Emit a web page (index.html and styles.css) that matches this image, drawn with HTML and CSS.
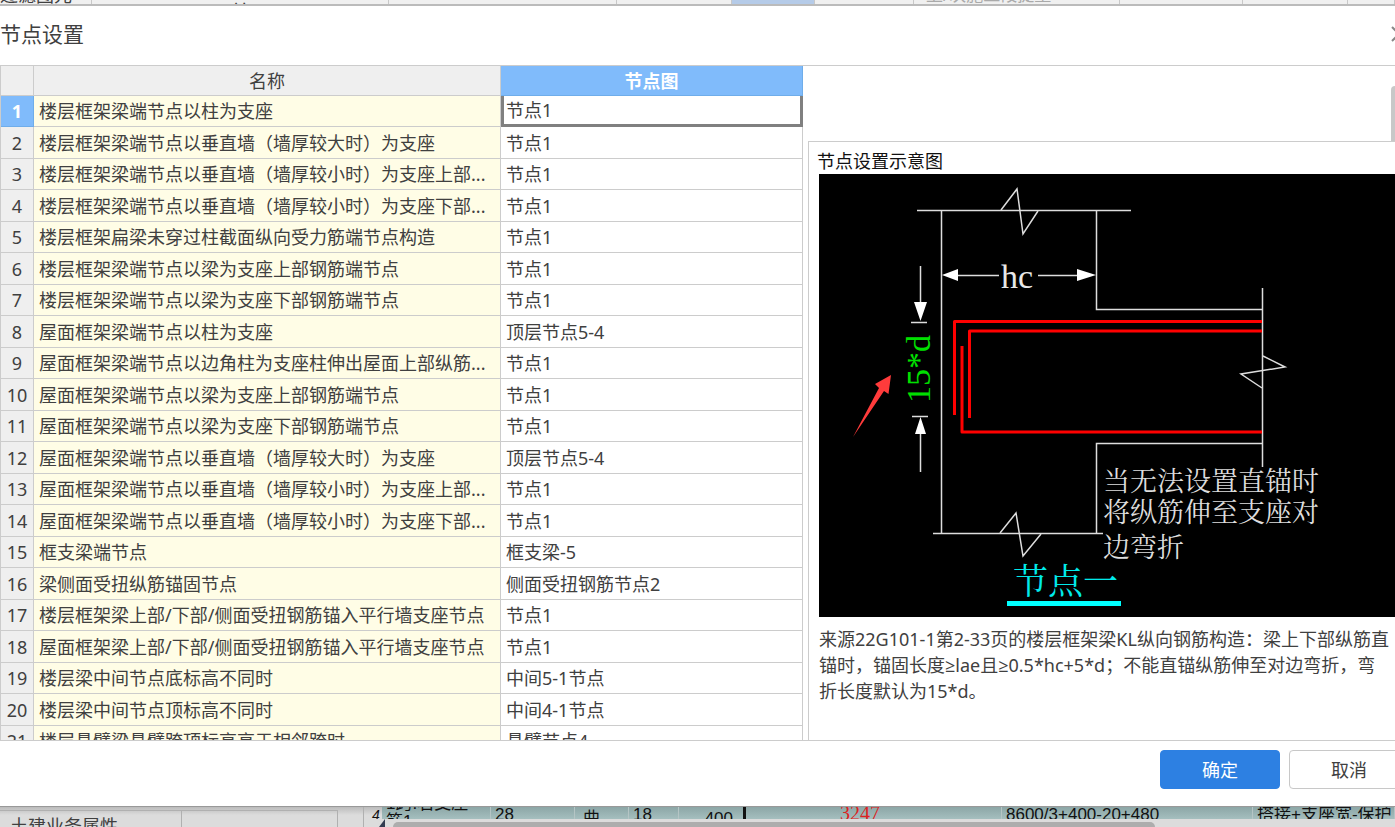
FILE: index.html
```html
<!DOCTYPE html>
<html lang="zh-CN">
<head>
<meta charset="utf-8">
<title>节点设置</title>
<link rel="stylesheet" href="styles.css">
</head>
<body>
<div class="ribbon">
  <span class="ribbon-label">过滤图元</span><span class="ribbon-below">关</span><span class="ribbon-empty"></span><span></span><span class="ribbon-active"></span><span></span><span class="ribbon-label ribbon-muted">上/次施工段提量</span><span></span><span></span><span></span>
</div>
<main class="dialog">
  <header class="dialog-header">
    <h1>节点设置</h1>
    <button class="close" type="button" aria-label="关闭"><svg width="16" height="16" viewBox="0 0 16 16"><path d="M1 1L15 15M15 1L1 15"/></svg></button>
  </header>
  <div class="dialog-content">
    <div class="table-pane">
      <table class="nodes">
        <colgroup><col class="col-index"><col class="col-name"><col class="col-node"></colgroup>
        <thead><tr><th></th><th scope="col">名称</th><th scope="col" class="active">节点图</th></tr></thead>
        <tbody>
          <tr class="current"><th scope="row">1</th><td>楼层框架梁端节点以柱为支座</td><td>节点1</td></tr>
          <tr><th scope="row">2</th><td>楼层框架梁端节点以垂直墙（墙厚较大时）为支座</td><td>节点1</td></tr>
          <tr><th scope="row">3</th><td>楼层框架梁端节点以垂直墙（墙厚较小时）为支座上部...</td><td>节点1</td></tr>
          <tr><th scope="row">4</th><td>楼层框架梁端节点以垂直墙（墙厚较小时）为支座下部...</td><td>节点1</td></tr>
          <tr><th scope="row">5</th><td>楼层框架扁梁未穿过柱截面纵向受力筋端节点构造</td><td>节点1</td></tr>
          <tr><th scope="row">6</th><td>楼层框架梁端节点以梁为支座上部钢筋端节点</td><td>节点1</td></tr>
          <tr><th scope="row">7</th><td>楼层框架梁端节点以梁为支座下部钢筋端节点</td><td>节点1</td></tr>
          <tr><th scope="row">8</th><td>屋面框架梁端节点以柱为支座</td><td>顶层节点5-4</td></tr>
          <tr><th scope="row">9</th><td>屋面框架梁端节点以边角柱为支座柱伸出屋面上部纵筋...</td><td>节点1</td></tr>
          <tr><th scope="row">10</th><td>屋面框架梁端节点以梁为支座上部钢筋端节点</td><td>节点1</td></tr>
          <tr><th scope="row">11</th><td>屋面框架梁端节点以梁为支座下部钢筋端节点</td><td>节点1</td></tr>
          <tr><th scope="row">12</th><td>屋面框架梁端节点以垂直墙（墙厚较大时）为支座</td><td>顶层节点5-4</td></tr>
          <tr><th scope="row">13</th><td>屋面框架梁端节点以垂直墙（墙厚较小时）为支座上部...</td><td>节点1</td></tr>
          <tr><th scope="row">14</th><td>屋面框架梁端节点以垂直墙（墙厚较小时）为支座下部...</td><td>节点1</td></tr>
          <tr><th scope="row">15</th><td>框支梁端节点</td><td>框支梁-5</td></tr>
          <tr><th scope="row">16</th><td>梁侧面受扭纵筋锚固节点</td><td>侧面受扭钢筋节点2</td></tr>
          <tr><th scope="row">17</th><td>楼层框架梁上部/下部/侧面受扭钢筋锚入平行墙支座节点</td><td>节点1</td></tr>
          <tr><th scope="row">18</th><td>屋面框架梁上部/下部/侧面受扭钢筋锚入平行墙支座节点</td><td>节点1</td></tr>
          <tr><th scope="row">19</th><td>楼层梁中间节点底标高不同时</td><td>中间5-1节点</td></tr>
          <tr><th scope="row">20</th><td>楼层梁中间节点顶标高不同时</td><td>中间4-1节点</td></tr>
          <tr><th scope="row">21</th><td>楼层悬臂梁悬臂跨顶标高高于相邻跨时</td><td>悬臂节点4</td></tr>
        </tbody>
      </table>
    </div>
    <div class="side">
      <div class="side-top"><div class="side-thumb"></div></div>
      <section class="preview">
        <h2>节点设置示意图</h2>
        <svg class="diagram" viewBox="0 0 576 443" role="img" aria-label="节点一">
          <rect class="canvas" width="576" height="443"/>
          <g class="outline">
            <path d="M98 36.5H312M122.5 36.5V359M277.500 36.5V135.500H443.500M443.500 114V293M114 359.500H284M277.500 359V269.500H443.500"/>
            <path d="M182 36L198 15L204 60L219 37M181 359L197 339L204 382L222 360M444 182L466 193L422 200L443 214"/>
            <path d="M139 101.500H180M219 101.500H259M101.500 92V130M101.500 258V298M92 148.500H108M93 242.500H109"/>
          </g>
          <path class="arrowhead" d="M123 101L139 95V107ZM277 101L258 95V107ZM101.500 147L95 128H108ZM101.500 243L96 260H107Z"/>
          <path class="rebar" d="M443 147.500H135.500V241M443 157H150.500V244M143 172V258H443"/>
          <text class="dim" x="182" y="114">hc</text>
          <text class="dim green" transform="translate(111 229) rotate(-90)">15*d</text>
          <text class="note" x="284" y="317">当无法设置直锚时</text>
          <text class="note" x="284" y="348">将纵筋伸至支座对</text>
          <text class="note" x="284" y="383">边弯折</text>
          <text class="caption" x="194" y="420">节点一</text>
          <rect class="cyan" x="188" y="427" width="114" height="5"/>
          <path class="pointer" d="M72 201L69.500 220L65 217L34 263L60 214L56 210Z"/>
        </svg>
        <p>来源22G101-1第2-33页的楼层框架梁KL纵向钢筋构造：梁上下部纵筋直<br>锚时，锚固长度≥lae且≥0.5*hc+5*d；不能直锚纵筋伸至对边弯折，弯<br>折长度默认为15*d。</p>
      </section>
    </div>
  </div>
  <footer class="dialog-footer">
    <button type="button" class="btn primary">确定</button>
    <button type="button" class="btn">取消</button>
  </footer>
</main>
<div class="workspace">
  <div class="props"><span>土建业务属性</span><span></span></div>
  <div class="gutter"></div>
  <div class="sheet">
    <div class="sheet-row">
      <span class="mark">4</span><span class="cell span-name">1跨.右支座<br>筋1</span><span class="cell">28</span><span class="cell lower">曲</span><span class="cell">18</span><span class="cell lower right caret">400</span><span class="cell red">3247</span><span class="cell">8600/3+400-20+480</span><span class="cell">搭接+支座宽-保护</span>
    </div>
    <div class="sheet-scroll"><svg width="6" height="8" viewBox="0 0 6 8"><path d="M6 0V8H0Z"/></svg><div class="sheet-thumb"></div></div>
  </div>
</div>
</body>
</html>
```
FILE: styles.css
```css
* { box-sizing: border-box; }

body {
  margin: 0;
  height: 100vh;
  display: flex;
  flex-direction: column;
  overflow: hidden;
  color: #404040;
  background: #fff;
  font: 18px/26px "Noto Sans", "Open Sans", "Noto Sans CJK SC", sans-serif;
}

button { font: inherit; color: inherit; }

/* Strip of the main window above the dialog */
.ribbon {
  flex: none;
  height: 6px;
  display: grid;
  grid-template-columns: 92fr 297fr 228fr 115fr 83fr 99fr 206fr 123fr 105fr 47fr;
  overflow: hidden;
  background: #f0f0f0;
  border-bottom: 2px solid #bbb;
}
.ribbon span {
  display: flex;
  height: 4px;
  overflow: hidden;
  white-space: nowrap;
  border-right: 1px solid #c8c8c8;
}
.ribbon .ribbon-label { align-items: flex-end; line-height: 18px; }
.ribbon .ribbon-muted { color: #aaa; padding-left: 12px; font-size: 17px; }
.ribbon .ribbon-below { justify-content: center; line-height: 22px; }
.ribbon .ribbon-active { background: #b5cbe8; }

/* Dialog */
.dialog {
  flex: 1;
  min-height: 0;
  display: flex;
  flex-direction: column;
  overflow: hidden;
}
.dialog-header {
  flex: none;
  height: 59px;
  display: flex;
  align-items: center;
  justify-content: space-between;
  padding-bottom: 4px;
}
.dialog-header h1 { margin: 0; font-size: 21px; font-weight: 400; }
.close {
  display: flex;
  margin: 0 -12px 0 0;
  padding: 0;
  border: 0;
  background: none;
}
.close path { stroke: #888; stroke-width: 2; fill: none; }
.dialog-content {
  flex: 1;
  min-height: 0;
  display: grid;
  grid-template-columns: minmax(0, 803fr) minmax(0, 592fr);
  border-top: 1px solid #ccc;
  border-bottom: 1px solid #ccc;
}
.table-pane { overflow: hidden; }

.nodes {
  width: 100%;
  table-layout: fixed;
  border-collapse: separate;
  border-spacing: 0;
  border-left: 1px solid #ccc;
  white-space: nowrap;
}
.col-index { width: 33px; }
.col-node { width: 302px; }
.nodes th,
.nodes td {
  padding: 0;
  overflow: hidden;
  border-right: 1px solid #ccc;
  border-bottom: 1px solid #ccc;
  font-weight: 400;
}
.nodes th { background: #efefef; text-align: center; }
.nodes thead tr { height: 30px; }
.nodes tbody tr { height: 31px; }
.nodes tbody tr:nth-child(even) { height: 32px; }
.nodes td { padding-left: 5px; }
.nodes td:nth-child(2) { background: #fffde6; }
.nodes .active,
.nodes .current th {
  color: #fff;
  background: #80bbfb;
  border-color: #6fadea;
  font-weight: 700;
}
.nodes .current td:last-child {
  padding-left: 2px;
  border: solid #808080;
  border-width: 0 3px 3px;
}

/* Preview */
.side {
  display: flex;
  flex-direction: column;
  min-height: 0;
  padding-left: 5px;
  overflow: hidden;
}
.side-top {
  flex: none;
  height: 75px;
  display: flex;
  justify-content: flex-end;
  padding-top: 20px;
}
.side-thumb { width: 4px; background: #c8c8c8; border-radius: 4px 0 0; }
.preview {
  flex: 1;
  border-top: 1px solid #ccc;
  border-left: 1px solid #ccc;
}
.preview h2 {
  margin: 0;
  padding: 6px 8px 0;
  color: #111;
  font-size: 18px;
  font-weight: 400;
}
.diagram { display: block; margin-left: 10px; width: calc(100% - 10px); }
.preview p { margin: 9px 0 0 10px; white-space: nowrap; }

.canvas { fill: #000; }
.outline { fill: none; stroke: #ddd; stroke-width: 1.5; }
.arrowhead { fill: #fff; }
.rebar { fill: none; stroke: #f00; stroke-width: 3; stroke-linejoin: round; }
.dim { fill: #e8e8e8; font: 34px "Liberation Serif", serif; }
.dim.green { fill: #00e000; }
.note { fill: #ddd; font: 400 27px "Noto Serif CJK SC", "Noto Sans CJK SC", serif; }
.caption { fill: #00eaea; font: 400 35px "Noto Serif CJK SC", "Noto Sans CJK SC", serif; }
.cyan { fill: #0ff; }
.pointer { fill: #ff3b3b; }

.dialog-footer {
  flex: none;
  height: 65px;
  display: flex;
  justify-content: flex-end;
  align-items: flex-start;
  gap: 9px;
  padding-top: 9px;
}
.btn {
  flex: none;
  width: 120px;
  height: 39px;
  padding: 0;
  border: 1px solid #c8c8c8;
  border-radius: 4px;
  background: #fff;
}
.btn.primary { color: #fff; background: #2d80e2; border-color: #2d80e2; }
.btn:last-child { margin-right: -14px; }

/* Strip of the main window below the dialog */
.workspace {
  flex: none;
  height: 21px;
  display: grid;
  grid-template-columns: 338fr 32fr 1025fr;
  overflow: hidden;
  background: linear-gradient(#bbb, #dcdcdc 8px);
  border-top: 1px solid #999;
}
.props {
  display: grid;
  grid-template-columns: 182fr 156fr;
  height: 17px;
  margin-top: 3px;
  border-top: 1px solid #b0b0b0;
}
.props span {
  padding: 2px 0 0 10px;
  border-right: 1px solid #b0b0b0;
}
.gutter { border-right: 1px solid #b0b0b0; margin-right: 6px; }
.sheet { min-width: 0; }
.sheet-row {
  height: 12px;
  display: grid;
  grid-template-columns: 12fr 109fr 84fr 54fr 50fr 67fr 256fr 251fr 142fr;
  overflow: hidden;
  color: #111;
  font: 17px/16px "Liberation Sans", "Noto Sans CJK SC", sans-serif;
  white-space: nowrap;
}
.mark { padding-left: 2px; font-size: 14px; font-style: italic; }
.cell {
  height: 12px;
  overflow: hidden;
  background: linear-gradient(#8ca6a6, #a5bfbf);
  border-right: 1px solid #b5c5c5;
  padding-left: 4px;
}
.span-name { display: flex; flex-direction: column; justify-content: center; line-height: 18px; }
.lower { padding: 4px 0 0 8px; }
.right { padding: 4px 10px 0 0; text-align: right; }
.caret { border-right: 3px solid #111; }
.red { color: #d22; padding-left: 94px; font: 20px/12px "Liberation Serif", serif; }
.sheet-scroll { display: flex; align-items: flex-end; gap: 8px; height: 8px; padding-left: 9px; }
.sheet-scroll path { fill: #333c50; }
.sheet-thumb { width: 75%; height: 5px; background: #adadad; border-radius: 5px 5px 0 0; }
```
